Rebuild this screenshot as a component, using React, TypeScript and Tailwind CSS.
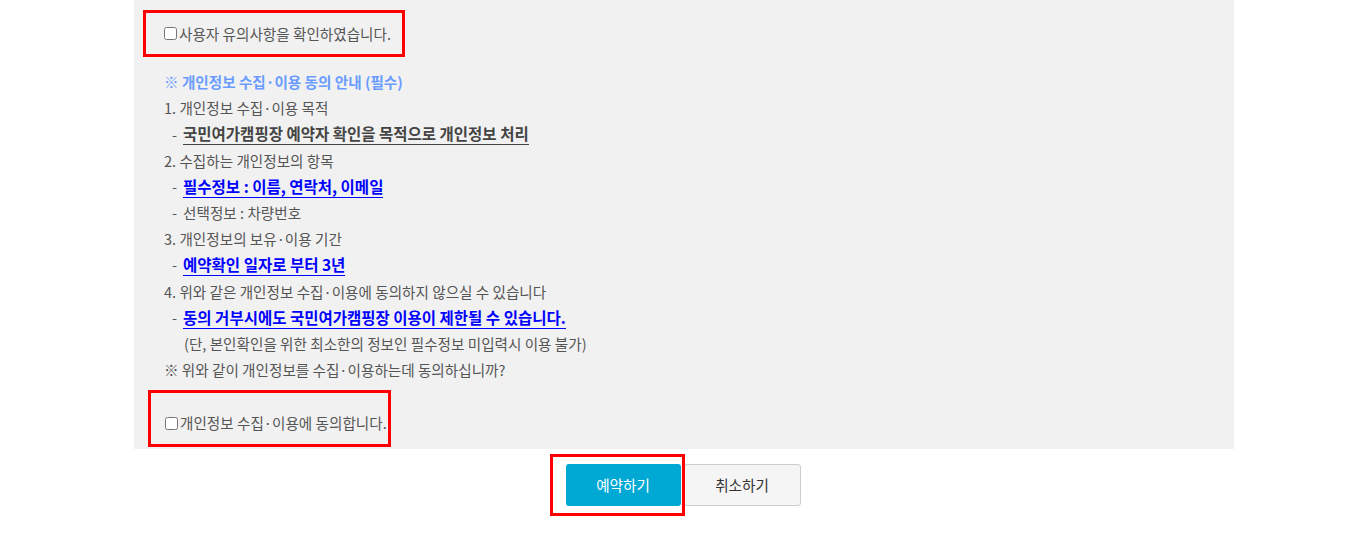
import React from "react";

const font = { fontFamily: '"Noto Sans CJK KR", "Noto Sans", sans-serif' };

const Line = ({ children, className = "" }: { children: React.ReactNode; className?: string }) => (
  <p className={`flex h-[26.2px] items-center whitespace-pre ${className}`}>{children}</p>
);

const Sub = ({ children, tone }: { children: React.ReactNode; tone?: "dark" | "blue" }) => (
  <Line className="pl-[8px]">
    <span className="mr-[6px]">-</span>
    {tone ? (
      <span
        className={`text-[15.5px] leading-[21px] font-bold border-b ${
          tone === "blue" ? "text-[#0000ff] border-[#0000ff]" : "text-[#444] border-[#444]"
        }`}
      >
        {children}
      </span>
    ) : (
      <span>{children}</span>
    )}
  </Line>
);

export default function App() {
  return (
    <div className="min-h-[553px] bg-white text-[14.6px] text-[#555]" style={font}>
      {/* ===== Agreement panel ===== */}
      <div className="ml-[134px] w-[1100px] bg-[#f1f1f1] pl-[9px] pt-[10px] pb-[2px]">
        <div className="flex h-[47px] w-[262px] items-center border-[3px] border-[#ff0000] pl-[18px]">
          <label className="flex items-center gap-[2px]">
            <input type="checkbox" className="m-0 h-[13px] w-[13px]" />
            사용자 유의사항을 확인하였습니다.
          </label>
        </div>

        <div className="pl-[21px] pt-[12px]">
          <Line className="font-bold text-[#6a9cff]">※ 개인정보 수집·이용 동의 안내 (필수)</Line>
          <Line>1. 개인정보 수집·이용 목적</Line>
          <Sub tone="dark">국민여가캠핑장 예약자 확인을 목적으로 개인정보 처리</Sub>
          <Line>2. 수집하는 개인정보의 항목</Line>
          <Sub tone="blue">필수정보 : 이름, 연락처, 이메일</Sub>
          <Sub>선택정보 : 차량번호</Sub>
          <Line>3. 개인정보의 보유·이용 기간</Line>
          <Sub tone="blue">예약확인 일자로 부터 3년</Sub>
          <Line>4. 위와 같은 개인정보 수집·이용에 동의하지 않으실 수 있습니다</Line>
          <Sub tone="blue">동의 거부시에도 국민여가캠핑장 이용이 제한될 수 있습니다.</Sub>
          <Line className="pl-[20px]">(단, 본인확인을 위한 최소한의 정보인 필수정보 미입력시 이용 불가)</Line>
          <Line>※ 위와 같이 개인정보를 수집·이용하는데 동의하십니까?</Line>
        </div>

        <div className="ml-[5px] mt-[7px] w-[243px] border-[3px] border-[#ff0000] pl-[14px] pt-[20px] pb-[11px]">
          <label className="flex h-[20px] items-center gap-[2px]">
            <input type="checkbox" className="m-0 h-[13px] w-[13px]" />
            개인정보 수집·이용에 동의합니다.
          </label>
        </div>
      </div>

      {/* ===== Buttons ===== */}
      <div className="ml-[134px] flex w-[1100px] justify-center gap-[3px] pr-[2px] pt-[15px]">
        <div className="relative">
          <button className="h-[42px] w-[115px] rounded-[3px] bg-[#00a9d4] text-[14.6px] text-white">
            예약하기
          </button>
          <div className="pointer-events-none absolute -left-[16px] -right-[4px] -top-[10px] -bottom-[10px] border-[3px] border-[#ff0000]" />
        </div>
        <button className="h-[42px] w-[117px] rounded-[3px] border border-[#cccccc] bg-[#f5f5f5] text-[14.6px] text-[#333]">
          취소하기
        </button>
      </div>
    </div>
  );
}
